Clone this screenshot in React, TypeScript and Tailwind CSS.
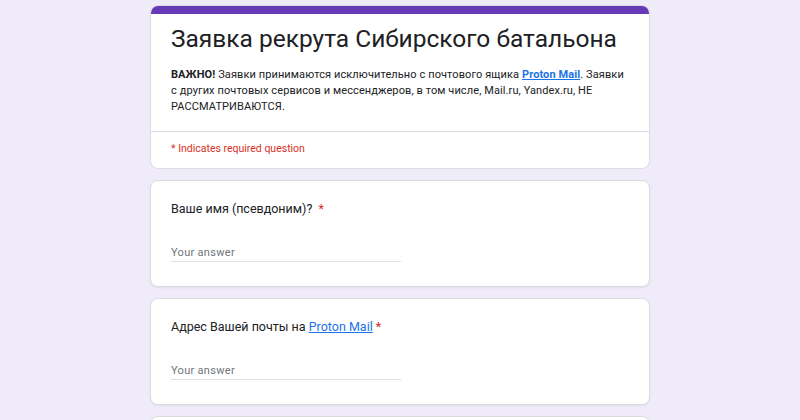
import { ReactNode } from "react";

const FONT = { fontFamily: "Roboto, 'Noto Sans', Arial, sans-serif" };

function Required() {
  return <span className="text-[#d93025]">*</span>;
}

function Answer() {
  return (
    <div className="mt-[27px] w-[230px] border-b border-[#e0e0e0] text-[11px] leading-[16px] tracking-[0.3px] text-[#70757a]">
      Your answer
    </div>
  );
}

function QuestionCard({ children }: { children: ReactNode }) {
  return (
    <div className="rounded-lg border border-[#dadce0] bg-white px-5 pt-[19px] pb-[24px] shadow-[0_1px_2px_rgba(60,64,67,0.08)]">
      <div className="text-[12.5px] leading-[18px] text-[#202124]">{children}</div>
      <Answer />
    </div>
  );
}

export default function App() {
  return (
    <div className="h-[420px] w-full overflow-hidden bg-[#f0ebf8]" style={FONT}>
      <div className="mx-auto flex w-[500px] flex-col gap-[11px] pt-[5px]">
        {/* шапка формы */}
        <div className="overflow-hidden rounded-lg border border-[#dadce0] bg-white">
          <div className="h-[8px] bg-[#673ab7]" />
          <div className="px-5 pt-[7px] pb-[16px]">
            <h1 className="whitespace-nowrap text-[24.5px] leading-[36px] text-[#202124]">
              Заявка рекрута Сибирского батальона
            </h1>
            <p className="mt-[10px] whitespace-nowrap text-[11px] leading-[16px] tracking-[0.1px] text-[#202124]">
              <b>ВАЖНО!</b> Заявки принимаются исключительно с почтового ящика{" "}
              <a className="font-bold text-[#1a73e8] underline">Proton Mail</a>. Заявки
              <br />с других почтовых сервисов и мессенджеров, в том числе, Mail.ru, Yandex.ru, НЕ
              <br />
              РАССМАТРИВАЮТСЯ.
            </p>
          </div>
          <div className="border-t border-[#dadce0] px-5 pt-[9px] pb-[11px] text-[10.5px] leading-[16px] text-[#d93025]">
            * Indicates required question
          </div>
        </div>

        <QuestionCard>
          Ваше имя (псевдоним)? &nbsp;<Required />
        </QuestionCard>

        <QuestionCard>
          Адрес Вашей почты на{" "}
          <a className="text-[#1a73e8] underline">Proton Mail</a> <Required />
        </QuestionCard>

        <div className="h-[40px] rounded-lg border border-[#dadce0] bg-white" />
      </div>
    </div>
  );
}
